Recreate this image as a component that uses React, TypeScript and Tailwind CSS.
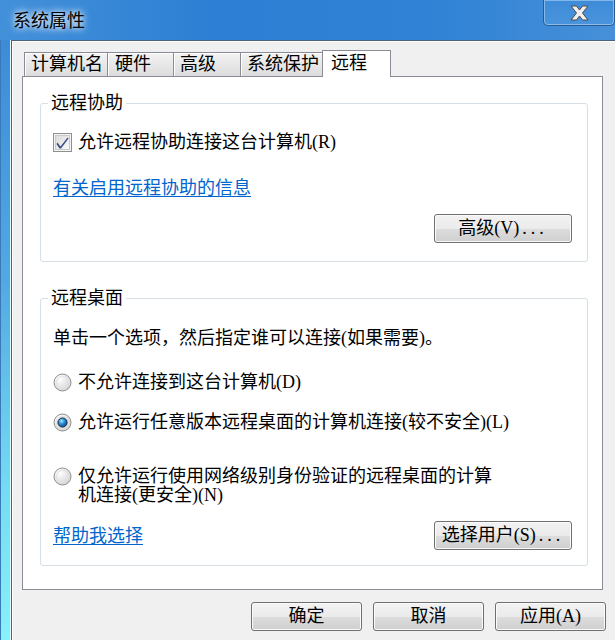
import React from "react";

const song = "font-['Liberation_Serif','Noto_Sans_CJK_SC',serif]";

function CheckBox() {
  return (
    <svg width="19" height="19" viewBox="0 0 19 19" className="shrink-0">
      <defs>
        <linearGradient id="cbIn" x1="0" y1="0" x2="1" y2="1">
          <stop offset="0" stopColor="#d9d9d9" />
          <stop offset="1" stopColor="#fbfbfb" />
        </linearGradient>
      </defs>
      <rect x="0.5" y="0.5" width="18" height="18" fill="#f4f4f4" stroke="#8e8f8f" />
      <rect x="2.5" y="2.5" width="14" height="14" fill="url(#cbIn)" stroke="#c9c9c9" />
      <path d="M4.5 9.5 L7.5 13.5 L14.5 4.5 L15.5 5.5 L8 15.5 L6.5 15.5 L3.5 11 Z" fill="#3f4f8c" />
    </svg>
  );
}

function Radio({ checked }: { checked?: boolean }) {
  return (
    <svg width="19" height="19" viewBox="0 0 19 19" className="shrink-0">
      <defs>
        <radialGradient id="rdBg" cx="0.35" cy="0.3" r="0.8">
          <stop offset="0" stopColor="#ffffff" />
          <stop offset="1" stopColor="#d0d0d0" />
        </radialGradient>
        <radialGradient id="rdDot" cx="0.4" cy="0.35" r="0.7">
          <stop offset="0" stopColor="#a8ecff" />
          <stop offset="0.45" stopColor="#2c8fd8" />
          <stop offset="1" stopColor="#0c3f7a" />
        </radialGradient>
      </defs>
      <circle cx="9.5" cy="9.5" r="8.5" fill="url(#rdBg)" stroke="#8e8f8f" />
      <circle cx="9.5" cy="9.5" r="6" fill="none" stroke="#e2e2e2" />
      {checked && <circle cx="9.5" cy="9.5" r="4.6" fill="url(#rdDot)" stroke="#1b2f4a" />}
    </svg>
  );
}

function Btn({ children, w = "w-[138px]" }: { children: React.ReactNode; w?: string }) {
  return (
    <div
      className={`${w} h-[29px] shrink-0 flex items-center justify-center rounded-[3px] border border-[#707070] bg-[linear-gradient(to_bottom,#f2f2f2_0%,#ebebeb_50%,#dddddd_51%,#cfcfcf_100%)] shadow-[inset_0_0_0_1px_#fbfbfb] text-[18px] leading-[27px] text-black`}
    >
      {children}
    </div>
  );
}

const tabs = [
  { label: "计算机名", w: "w-[84px]", pl: "pl-[6px]" },
  { label: "硬件", w: "w-[67px]", pl: "pl-[7px]" },
  { label: "高级", w: "w-[68px]", pl: "pl-[6px]" },
  { label: "系统保护", w: "w-[83px]", pl: "pl-[6px]" },
];

export default function App() {
  return (
    <div className={`w-[615px] h-[640px] overflow-hidden flex flex-col ${song}`}>
      {/* Title bar */}
      <div className="h-[40px] shrink-0 flex items-start justify-between bg-[linear-gradient(to_right,#4390da,#2c7fd4_35%,#2f82d5_70%,#4790d9)]">
        <div className="ml-[13px] mt-[8px] text-[18px] leading-[22px] text-black font-['Noto_Sans_CJK_SC',sans-serif] [text-shadow:0_0_6px_#ffffff,0_0_10px_rgba(255,255,255,0.8)]">
          系统属性
        </div>
        <div className="w-[72px] h-[26px] flex items-center justify-center rounded-b-[5px] border border-t-0 border-[#2b5a90] shadow-[inset_0_0_0_1px_rgba(190,220,250,0.55)] bg-[linear-gradient(to_bottom,#3d8bd8,#4a94dc)]">
          <svg width="19" height="16" viewBox="0 0 19 16">
            <polygon
              points="1,1 6.5,1 9.5,5 12.5,1 18,1 12.5,8 18,15 12.5,15 9.5,11 6.5,15 1,15 6.5,8"
              fill="#efefef"
              stroke="#4b4b4b"
              strokeWidth="1"
              strokeLinejoin="round"
            />
          </svg>
        </div>
      </div>

      <div className="flex flex-1">
        {/* Left frame */}
        <div className="w-[11px] shrink-0 border-l border-[#3a78b8] border-r border-r-[#e4fbff] bg-[linear-gradient(to_bottom,#3c8bd8,#52a9e2_40%,#74dcf3_75%,#86f2fa)]" />

        {/* Window content */}
        <div className="flex-1 flex flex-col bg-[#f0f0f0] border-l border-t border-[#4b6180] shadow-[inset_1px_1px_0_#ffffff] pl-[10px] pr-[12px] pt-[9px]">
          {/* Tabs */}
          <div className="h-[26px] flex items-end pl-[2px]">
            {tabs.map((t, i) => (
              <div
                key={t.label}
                className={`${t.w} ${t.pl} ${i > 0 ? "-ml-px" : ""} h-[24px] border border-b-0 border-[#898c95] bg-[linear-gradient(to_bottom,#f3f3f3,#dcdcdc)] shadow-[inset_1px_1px_0_#ffffff] text-[18px] leading-[22px] text-black`}
              >
                {t.label}
              </div>
            ))}
            <div className="w-[69px] -ml-px h-[27px] -mb-px relative z-10 border border-b-0 border-[#898c95] bg-white pl-[8px] text-[18px] leading-[25px] text-black">
              远程
            </div>
          </div>

          {/* Tab panel */}
          <div className="h-[514px] border border-[#898c95] bg-white pl-[17px] pr-[14px] pt-[17px] flex flex-col">
            {/* Remote assistance */}
            <fieldset className="border border-[#d5dfe5] rounded-[3px]">
              <legend className="ml-[7px] px-[3px] text-[18px] leading-[18px] text-black">远程协助</legend>
              <div className="pl-[12px] pr-[15px] pb-[18px] flex flex-col">
                <div className="mt-[21px] flex items-center gap-[6px] text-[18px] leading-[19px] text-black">
                  <CheckBox />
                  <span>允许远程协助连接这台计算机(R)</span>
                </div>
                <div className="mt-[27px] text-[18px] leading-[19px] text-[#0066cc] underline underline-offset-[2px]">
                  有关启用远程协助的信息
                </div>
                <div className="mt-[16px] self-end">
                  <Btn>
                    高级(V)<span className="tracking-[4px] ml-[3px]">...</span>
                  </Btn>
                </div>
              </div>
            </fieldset>

            {/* Remote desktop */}
            <fieldset className="mt-[27px] border border-[#d5dfe5] rounded-[3px]">
              <legend className="ml-[7px] px-[3px] text-[18px] leading-[18px] text-black">远程桌面</legend>
              <div className="pl-[12px] pr-[15px] pb-[15px] flex flex-col text-[18px] leading-[19px] text-black">
                <div className="mt-[22px]">单击一个选项，然后指定谁可以连接(如果需要)。</div>
                <div className="mt-[25px] flex items-center gap-[6px]">
                  <Radio />
                  <span>不允许连接到这台计算机(D)</span>
                </div>
                <div className="mt-[21px] flex items-center gap-[6px]">
                  <Radio checked />
                  <span>允许运行任意版本远程桌面的计算机连接(较不安全)(L)</span>
                </div>
                <div className="mt-[35px] flex items-start gap-[6px]">
                  <Radio />
                  <span>
                    仅允许运行使用网络级别身份验证的远程桌面的计算
                    <br />
                    机连接(更安全)(N)
                  </span>
                </div>
                <div className="mt-[16px] flex items-start justify-between">
                  <span className="mt-[6px] text-[#0066cc] underline underline-offset-[2px]">帮助我选择</span>
                  <Btn>
                    选择用户(S)<span className="tracking-[4px] ml-[3px]">...</span>
                  </Btn>
                </div>
              </div>
            </fieldset>
          </div>

          {/* Dialog buttons */}
          <div className="mt-[12px] -mr-[3px] flex justify-end gap-[11px]">
            <Btn w="w-[111px]">确定</Btn>
            <Btn w="w-[111px]">取消</Btn>
            <Btn w="w-[111px]">应用(A)</Btn>
          </div>
        </div>
      </div>
    </div>
  );
}
